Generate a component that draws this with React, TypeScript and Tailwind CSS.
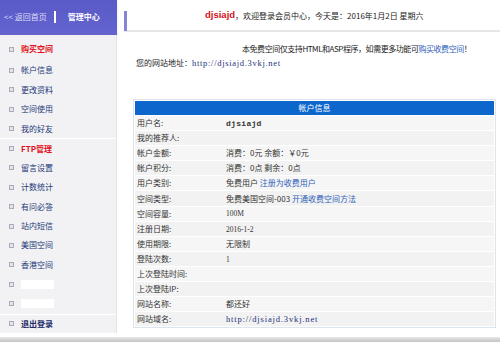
import React from "react";

const cjk = { fontFamily: "'Noto Sans CJK SC', 'Noto Sans', sans-serif" };
const serif = { fontFamily: "'Liberation Serif', serif" };

type Item = { label: string; red?: boolean; bold?: boolean; blank?: boolean };
const menu: Item[] = [
  { label: "购买空间", red: true },
  { label: "帐户信息" },
  { label: "更改资料" },
  { label: "空间使用" },
  { label: "我的好友" },
  { label: "FTP管理", red: true },
  { label: "留言设置" },
  { label: "计数统计" },
  { label: "有问必答" },
  { label: "站内短信" },
  { label: "美国空间" },
  { label: "香港空间" },
  { label: "", blank: true },
  { label: "", blank: true },
  { label: "退出登录", bold: true },
];

type Row = { k: string; v?: React.ReactNode };
const rows: Row[] = [
  { k: "用户名:", v: <span className="font-bold text-[8px] tracking-[0.3px]" style={{ fontFamily: "'Liberation Mono', monospace" }}>djsiajd</span> },
  { k: "我的推荐人:" },
  { k: "帐户金额:", v: <span>消费：0元 余额：￥0元</span> },
  { k: "帐户积分:", v: <span>消费：0点 剩余：0点</span> },
  { k: "用户类别:", v: <span>免费用户 <span className="text-[#2f5fb8]">注册为收费用户</span></span> },
  { k: "空间类型:", v: <span>免费美国空间-003 <span className="text-[#2f5fb8]">开通收费空间方法</span></span> },
  { k: "空间容量:", v: <span className="text-[7.5px]" style={serif}>100M</span> },
  { k: "注册日期:", v: <span className="text-[7.5px]" style={serif}>2016-1-2</span> },
  { k: "使用期限:", v: <span>无限制</span> },
  { k: "登陆次数:", v: <span className="text-[7.5px]" style={serif}>1</span> },
  { k: "上次登陆时间:" },
  { k: "上次登陆IP:" },
  { k: "网站名称:", v: <span>都还好</span> },
  { k: "网站域名:", v: <span className="text-[8.5px] tracking-[0.85px] text-[#23307a]" style={serif}>http://djsiajd.3vkj.net</span> },
];

export default function App() {
  return (
    <div className="w-[500px] h-[342px] bg-white flex flex-col overflow-hidden text-[8px] text-[#222]" style={cjk}>
      <div className="flex flex-1 min-h-0">
        {/* Sidebar */}
        <div className="w-[117px] flex flex-col h-[333px]">
          <div className="h-[35px] flex items-center bg-gradient-to-b from-[#5a5ac8] to-[#6464cf] text-white shadow-[0_1px_2px_rgba(0,0,0,0.15)]">
            <span className="pl-[4px] text-[#dcdcf5] text-[8px] whitespace-nowrap">&lt;&lt; 返回首页</span>
            <span className="ml-[7px] w-[2px] h-[12px] bg-white" />
            <span className="ml-[12px] font-bold text-[8px] whitespace-nowrap">管理中心</span>
          </div>
          <div className="flex-1 bg-[#f2f2f4] border-r border-[#e2e2ea] pt-[3px]">
            {menu.map((m, i) => (
              <div
                key={i}
                className={`flex items-center ${i === 0 ? "h-[23px]" : "h-[19.46px]"} ${i === 5 || i === 14 ? "border-t border-white" : ""}`}
              >
                <span className="ml-[9px] w-[5px] h-[5px] border border-[#a9abbb] bg-[#e4e4ea]" />
                {m.blank ? (
                  <span className="ml-[7px] w-[33px] h-[9px] bg-white" />
                ) : (
                  <span
                    className={`ml-[7px] whitespace-nowrap ${m.red ? "text-[#e0121c] font-bold" : m.bold ? "text-[#1d2a66] font-bold" : "text-[#243878]"}`}
                  >
                    {m.label}
                  </span>
                )}
              </div>
            ))}
          </div>
        </div>

        {/* Main */}
        <div className="flex-1 flex flex-col">
          <div className="flex h-[32px] border-b-2 border-[#e6e6e6] ml-[7px]">
            <span className="mt-[11px] w-[3px] h-[20px] bg-[#8585d4]" />
            <div className="flex-1 flex items-center pl-[78px] pt-[1px] whitespace-nowrap">
              <span className="text-[#d4121c] font-bold text-[9.5px]" style={{ fontFamily: "'Liberation Sans', Arial, sans-serif" }}>djsiajd</span>
              <span>，欢迎登录会员中心，今天是：2016年1月2日 星期六</span>
            </div>
          </div>
          <div className="pl-[125px] mt-[10px] h-[13px] flex items-center whitespace-nowrap tracking-[-0.45px]">
            本免费空间仅支持HTML和ASP程序，如需更多功能可<span className="text-[#2f5fb8]">购买收费空间</span>！
          </div>
          <div className="pl-[19px] mt-[1px] h-[14px] flex items-center whitespace-nowrap">
            您的网站地址：<span className="text-[8.5px] tracking-[0.7px] text-[#23307a]" style={serif}>http://djsiajd.3vkj.net</span>
          </div>

          <div className="ml-[16px] mr-[4px] mt-[29px] border border-[#dbe3ec] p-[1px] bg-white">
            <div className="h-[14px] bg-[#0d66cc] text-white flex items-center justify-center">帐户信息</div>
            {rows.map((r, i) => (
              <div
                key={i}
                className={`flex items-center h-[15.1px] border-t border-white ${i % 2 === 0 ? "bg-[#f6f6f6]" : "bg-[#f2f2f2]"}`}
              >
                <span className="w-[91px] pl-[2px] text-[#333] whitespace-nowrap">{r.k}</span>
                <span className="text-[#333] whitespace-nowrap">{r.v}</span>
              </div>
            ))}
          </div>
        </div>
      </div>
      <div className="h-[5px] bg-gradient-to-b from-[#e8e8e8] to-[#c4c4c4]" />
    </div>
  );
}
